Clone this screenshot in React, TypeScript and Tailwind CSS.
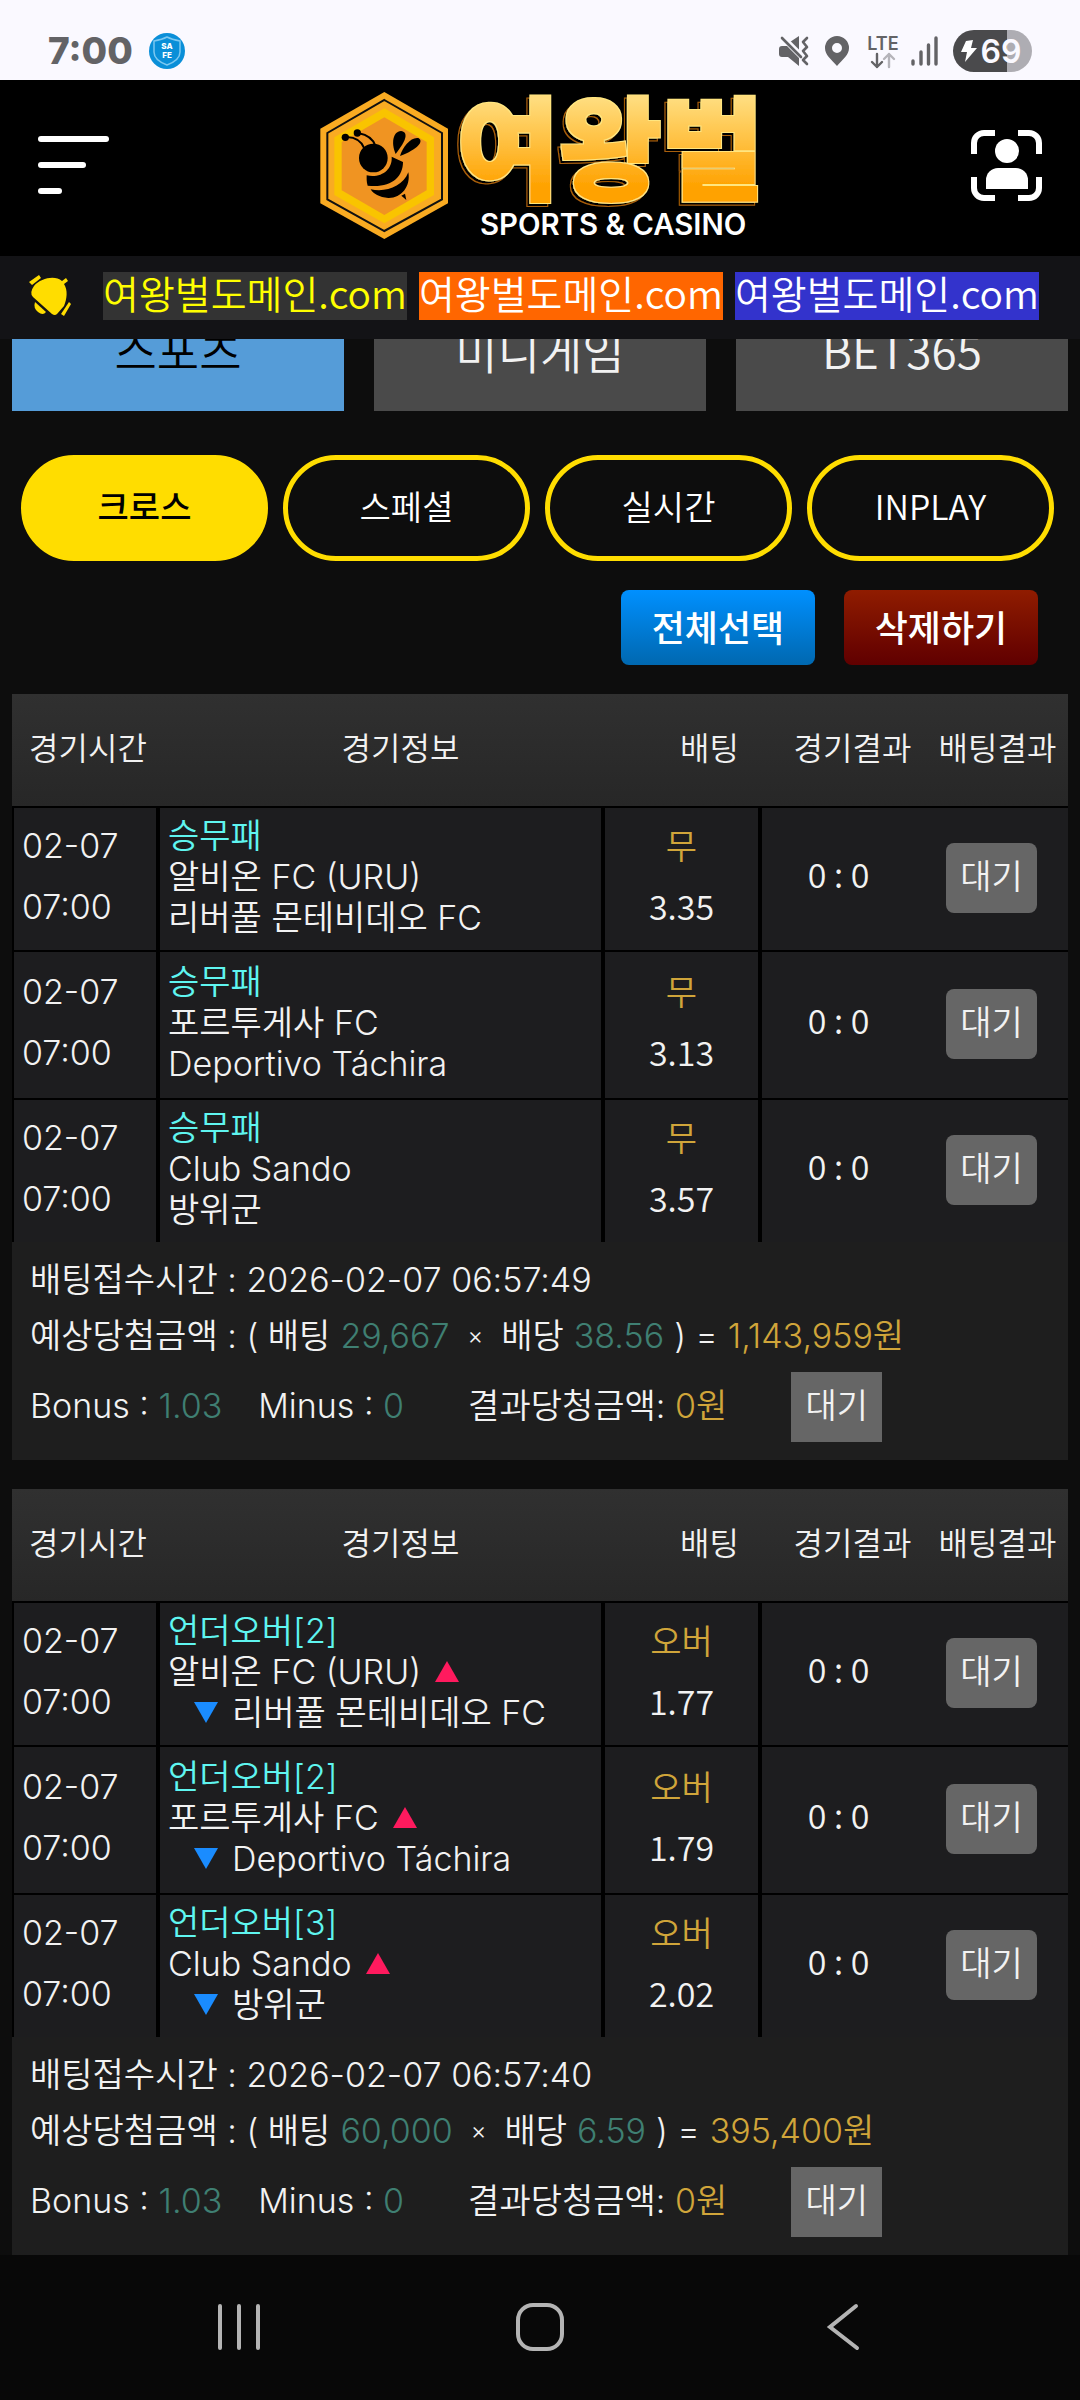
import type { ReactNode } from "react";

interface Match {
  market: string;
  home: string;
  away: string;
  pick: string;
  odds: string;
  tall?: boolean;
}

interface Slip {
  id: number;
  arrows: boolean;
  matches: Match[];
  time: string;
  stake: string;
  totalOdds: string;
  payout: string;
}

const slips: Slip[] = [
  {
    id: 1,
    arrows: false,
    matches: [
      { market: "승무패", home: "알비온 FC (URU)", away: "리버풀 몬테비데오 FC", pick: "무", odds: "3.35" },
      { market: "승무패", home: "포르투게사 FC", away: "Deportivo Táchira", pick: "무", odds: "3.13", tall: true },
      { market: "승무패", home: "Club Sando", away: "방위군", pick: "무", odds: "3.57" },
    ],
    time: "2026-02-07 06:57:49",
    stake: "29,667",
    totalOdds: "38.56",
    payout: "1,143,959원",
  },
  {
    id: 2,
    arrows: true,
    matches: [
      { market: "언더오버[2]", home: "알비온 FC (URU)", away: "리버풀 몬테비데오 FC", pick: "오버", odds: "1.77" },
      { market: "언더오버[2]", home: "포르투게사 FC", away: "Deportivo Táchira", pick: "오버", odds: "1.79", tall: true },
      { market: "언더오버[3]", home: "Club Sando", away: "방위군", pick: "오버", odds: "2.02" },
    ],
    time: "2026-02-07 06:57:40",
    stake: "60,000",
    totalOdds: "6.59",
    payout: "395,400원",
  },
];

const domains = [
  { id: "yellow", className: "bg-[#333333] pb-2 text-[#ffff00]" },
  { id: "orange", className: "bg-[#ff6600] pb-2 text-white" },
  { id: "blue", className: "bg-[#3333cc] pb-2 text-white" },
];

function StatusBar() {
  return (
    <div className="flex h-20 items-center justify-between bg-[#faf9ff] pt-[22px] pr-12 pl-12 text-[#636366]">
      <div className="flex items-center gap-4">
        <span className="font-['Inter'] text-[37px] leading-10 font-extrabold">7:00</span>
        <svg className="size-9" viewBox="0 0 36 36">
          <circle cx="18" cy="18" r="18" fill="#0a8fd8" />
          <path d="M18 4c4 2 8 3 13 4v11c0 6-5 10-13 13C10 29 5 25 5 19V8c5-1 9-2 13-4z" fill="none" stroke="#7cc8f0" strokeWidth="1.5" />
          <text x="18" y="16" textAnchor="middle" fontFamily="Inter" fontSize="8" fontWeight="800" fill="#fff">SA</text>
          <text x="18" y="25" textAnchor="middle" fontFamily="Inter" fontSize="8" fontWeight="800" fill="#fff">FE</text>
        </svg>
      </div>
      <div className="flex items-center">
        <svg className="mr-4 h-[30px] w-[30px]" viewBox="0 0 30 30">
          <path d="M0 13q0-3 3-3h5l12 12v8L9 21H3q-3 0-3-3z" fill="currentColor" />
          <path d="M11 6l9-6v15z" fill="currentColor" />
          <path d="M3 2l19 19" stroke="currentColor" strokeWidth="2.6" strokeLinecap="round" />
          <path d="M28 2l-4 4 4 5-4 4 4 5-4 4 4 4" fill="none" stroke="currentColor" strokeWidth="2.6" strokeLinejoin="round" strokeLinecap="round" />
          <path d="M6 1l17 17" stroke="#faf9ff" strokeWidth="2" />
        </svg>
        <svg className="mr-[18px] h-[30px] w-6" viewBox="0 0 24 30">
          <path fillRule="evenodd" d="M12 0a12 12 0 0 1 12 12c0 7-6 11-12 18C6 23 0 19 0 12A12 12 0 0 1 12 0zm0 7a5 5 0 1 0 0 10 5 5 0 0 0 0-10z" fill="currentColor" />
        </svg>
        <svg className="mr-3 h-9 w-8" viewBox="0 0 32 36">
          <text x="16" y="17" textAnchor="middle" fontFamily="Inter" fontSize="18" fontWeight="600" fill="currentColor">LTE</text>
          <path d="M10 21v13M5 29l5 5 5-5" fill="none" stroke="currentColor" strokeWidth="2.4" strokeLinecap="round" strokeLinejoin="round" />
          <path d="M22 34V21M17 26l5-5 5 5" fill="none" stroke="#b5b4ba" strokeWidth="2.4" strokeLinecap="round" strokeLinejoin="round" />
        </svg>
        <svg className="mr-[15px] h-[30px] w-[27px]" viewBox="0 0 27 30">
          <path d="M2 28v-3M10 28V16M17.500 28V9M25 28V2" stroke="currentColor" strokeWidth="3.4" strokeLinecap="round" />
        </svg>
        <svg className="h-[42px] w-[79px]" viewBox="0 0 79 42">
          <path d="M21 0h33v42H21a21 21 0 0 1 0-42z" fill="#4a4a4c" />
          <path d="M54 0h4a21 21 0 0 1 0 42h-4z" fill="#aeadb3" />
          <path d="M13 11l7-1-2 8h6L12 32l2-10H8z" fill="#fff" />
          <text x="48" y="33" textAnchor="middle" fontFamily="Inter" fontSize="32" fontWeight="600" fill="#faf9ff">69</text>
        </svg>
      </div>
    </div>
  );
}

function Logo() {
  return (
    <svg className="h-[150px] w-[441px] overflow-visible" viewBox="57 30 1323 450" role="img" aria-label="여왕벌 SPORTS & CASINO">
      <defs>
        <linearGradient id="gold" gradientUnits="userSpaceOnUse" x1="0" y1="60" x2="0" y2="350">
          <stop offset="0" stopColor="#ffdc7c" />
          <stop offset="0.9" stopColor="#ffa200" />
        </linearGradient>
        {/* brown contour behind the wordmark, shifted down and left */}
        <filter id="contour" x="-5%" y="-5%" width="110%" height="110%">
          <feOffset in="SourceAlpha" dx="-10" dy="10" result="shifted" />
          <feMorphology in="shifted" operator="dilate" radius="3" result="wide" />
          <feFlood floodColor="#a85f10" />
          <feComposite in2="wide" operator="in" result="brown" />
          <feFlood floodColor="#000" />
          <feComposite in2="shifted" operator="in" result="inner" />
          <feMorphology in="SourceAlpha" operator="dilate" radius="2" result="edge" />
          <feFlood floodColor="#ffe680" />
          <feComposite in2="edge" operator="in" result="rim" />
          <feMerge>
            <feMergeNode in="brown" />
            <feMergeNode in="inner" />
            <feMergeNode in="rim" />
            <feMergeNode in="SourceGraphic" />
          </feMerge>
        </filter>
      </defs>
      <path d="M250 36L441 146V370L250 477L58 370V146Z" fill="#f9ab22" />
      <path d="M250 60L423 159V358L250 453L79 358V159Z" fill="none" stroke="#111" strokeWidth="6" />
      <path d="M250 85L399 172V345L250 430L100 345V172Z" fill="#f9c400" />
      <path d="M250 112L377 186V331L250 405L122 331V186Z" fill="#f09422" />
      <circle cx="217" cy="234" r="43" />
      <circle cx="133" cy="172" r="11" />
      <circle cx="169" cy="159" r="11" />
      <path d="M138 171C165 172 182 185 190 205M174 160C200 165 216 178 223 197" fill="none" stroke="#000" strokeWidth="6" />
      <path d="M284 222C270 190 275 155 300 153C322 157 318 178 284 222Z" />
      <path d="M297 228C305 200 330 170 352 174C370 184 350 208 297 228Z" />
      <path d="M272 230L306 246C306 292 270 325 200 317C196 305 197 295 197 286C240 295 275 270 272 230Z" />
      <path d="M322 277C330 320 300 355 262 354C235 352 217 342 209 328C255 338 305 320 322 277Z" />
      <path d="M301 347L316 360L312 341Z" />
      <text
        x="467"
        y="332"
        fontFamily="'Noto Sans CJK KR'"
        fontWeight="900"
        fontSize="334"
        fill="url(#gold)"
        stroke="url(#gold)"
        strokeWidth="6"
        filter="url(#contour)"
      >
        여왕벌
      </text>
      <text x="537" y="464" fontFamily="Inter" fontWeight="600" fontSize="88" fill="#fff">SPORTS &amp; CASINO</text>
    </svg>
  );
}

function Header() {
  return (
    <header className="flex h-44 items-center justify-between bg-black px-[38px] pb-[6px]">
      <button type="button" aria-label="menu" className="flex w-[71px] flex-col gap-5">
        <span className="h-[6px] w-full rounded-full bg-white" />
        <span className="h-[6px] w-12 rounded-full bg-white" />
        <span className="h-[6px] w-6 rounded-full bg-white" />
      </button>
      <Logo />
      <button type="button" aria-label="account" className="w-[71px]">
        <svg className="size-[71px]" viewBox="0 0 71 71" fill="none">
          <path d="M24 3H13A10 10 0 0 0 3 13V24M47 3H58A10 10 0 0 1 68 13V24M24 68H13A10 10 0 0 1 3 58V47M47 68H58A10 10 0 0 0 68 58V47" stroke="#fff" strokeWidth="6" />
          <circle cx="36" cy="21" r="12" fill="#fff" />
          <path d="M15 59V50A12 12 0 0 1 27 38H45A12 12 0 0 1 57 50V59Z" fill="#fff" />
        </svg>
      </button>
    </header>
  );
}

function NoticeBar() {
  return (
    <div className="flex h-[83px] items-center bg-[#131316] pb-1 pl-[29px]">
      <svg className="mr-8 h-[42px] w-[42px] shrink-0" viewBox="0 0 42 42" fill="#ffdd00">
        <path d="M5 11C12 3 26 0 33 6L37 3L39 6L35 9C39 15 38 24 35 31L28 39Q26 41 23 39L4 22Q0 18 5 11Z" />
        <path d="M0 7L10 0L12 3L3 10Z" />
        <path d="M6 27L17 37Q14 41 9 37Q4 33 6 27Z" />
        <path d="M40 27L42 29L35 41L32 39Z" />
      </svg>
      <div className="flex gap-3 text-[39px] leading-10 whitespace-nowrap">
        {domains.map((domain) => (
          <a key={domain.id} href="#domain" className={domain.className}>
            여왕벌도메인.com
          </a>
        ))}
      </div>
    </div>
  );
}

function Pill({ active, children }: { active?: boolean; children: ReactNode }) {
  return (
    <button
      type="button"
      className={
        active
          ? "h-[106px] flex-1 rounded-full border-5 border-[#ffdd00] bg-[#ffdd00] pb-[6px] font-medium text-black"
          : "h-[106px] flex-1 rounded-full border-5 border-[#ffdd00] pb-[6px] text-white"
      }
    >
      {children}
    </button>
  );
}

function Triangle({ up }: { up?: boolean }) {
  return (
    <svg className="h-[21px] w-6" viewBox="0 0 24 21">
      {up ? <path d="M12 0L24 21H0Z" fill="#ff1a5e" /> : <path d="M0 0H24L12 21Z" fill="#1a8cff" />}
    </svg>
  );
}

function MatchRow({ match, arrows }: { match: Match; arrows: boolean }) {
  return (
    <tr className={match.tall ? "h-[148px] bg-[#1d1d1f]" : "h-36 bg-[#1d1d1f]"}>
      <td className="border-t-2 border-r-4 border-l-2 border-black pb-[6px] pl-2 font-['Inter','Noto_Sans_CJK_KR',sans-serif] leading-[61px]">
        <div>02-07</div>
        <div>07:00</div>
      </td>
      <td className="border-t-2 border-r-4 border-black pb-[6px] pl-2 font-['Inter','Noto_Sans_CJK_KR',sans-serif] leading-[41px] whitespace-nowrap">
        <div className="text-[#5ff5f0]">{match.market}</div>
        <div className="flex items-center gap-[14px]">
          {match.home}
          {arrows && <Triangle up />}
        </div>
        <div className={arrows ? "flex items-center gap-[14px] pl-[26px]" : "flex items-center"}>
          {arrows && <Triangle />}
          {match.away}
        </div>
      </td>
      <td className="border-t-2 border-r-4 border-black pb-2 text-center leading-[61px]">
        <div className="text-[#d0a53a]">{match.pick}</div>
        <div>{match.odds}</div>
      </td>
      <td className="border-t-2 border-black pb-3 text-center">0 : 0</td>
      <td className="border-t-2 border-black pb-[2px] text-center">
        <button type="button" className="h-[70px] w-[91px] rounded-lg bg-[#666666] pb-2">
          대기
        </button>
      </td>
    </tr>
  );
}

function BetSlip({ slip }: { slip: Slip }) {
  return (
    <section className="bg-[#1e1e1e]">
      <table className="w-full table-fixed border-separate border-spacing-0">
        <colgroup>
          <col className="w-[148px]" />
          <col />
          <col className="w-[157px]" />
          <col className="w-[153px]" />
          <col className="w-[153px]" />
        </colgroup>
        <thead>
          <tr className="h-28 bg-linear-to-b from-[#303030] to-[#272727] text-[32px] whitespace-nowrap *:pb-2 *:font-[350]">
            <th className="pl-1">경기시간</th>
            <th className="pl-9">경기정보</th>
            <th className="pl-13">배팅</th>
            <th className="pl-7">경기결과</th>
            <th className="pl-3">배팅결과</th>
          </tr>
        </thead>
        <tbody>
          {slip.matches.map((match) => (
            <MatchRow key={match.home} match={match} arrows={slip.arrows} />
          ))}
        </tbody>
      </table>
      <div className="px-[18px] pt-[10px] pb-[18px] font-['Inter','Noto_Sans_CJK_KR',sans-serif] whitespace-nowrap">
        <p className="leading-14">배팅접수시간 : {slip.time}</p>
        <p className="flex gap-[10px] leading-14">
          <span>예상당첨금액 : ( 배팅</span>
          <span className="mr-2 text-[#3f7f72]">{slip.stake}</span>
          <span className="mr-2 text-[24px]">×</span>
          <span>배당</span>
          <span className="text-[#3f7f72]">{slip.totalOdds}</span>
          <span>) =</span>
          <span className="text-[#d0a53a]">{slip.payout}</span>
        </p>
        <div className="mt-2 flex h-[70px] items-center">
          <span className="mr-9 pb-1">
            Bonus : <span className="text-[#3f7f72]">1.03</span>
          </span>
          <span className="mr-16 pb-1">
            Minus : <span className="text-[#3f7f72]">0</span>
          </span>
          <span className="mr-16 pb-1">
            결과당청금액: <span className="text-[#d0a53a]">0원</span>
          </span>
          <button type="button" className="h-[70px] w-[91px] bg-[#666666] pb-1">
            대기
          </button>
        </div>
      </div>
    </section>
  );
}

function NavBar() {
  return (
    <nav className="grid h-[145px] grid-cols-3 items-center justify-items-center bg-[#080808] px-22 pb-[2px] text-[#b4b4b4]">
      <button type="button" aria-label="recents">
        <svg className="size-12" viewBox="0 0 48 48">
          <path d="M5 3V45M24 3V45M43 3V45" stroke="currentColor" strokeWidth="4" strokeLinecap="round" />
        </svg>
      </button>
      <button type="button" aria-label="home">
        <svg className="size-12" viewBox="0 0 48 48">
          <rect x="2" y="2" width="44" height="44" rx="15" fill="none" stroke="currentColor" strokeWidth="4" />
        </svg>
      </button>
      <button type="button" aria-label="back">
        <svg className="size-12" viewBox="0 0 48 48">
          <path d="M39 3L13 24L40 45" fill="none" stroke="currentColor" strokeWidth="4" strokeLinecap="round" />
        </svg>
      </button>
    </nav>
  );
}

export default function App() {
  return (
    <div className="min-h-screen bg-[#0d0d0d] font-['Noto_Sans_CJK_KR',sans-serif] text-[34px] font-[350] text-[#f2f2f2]">
      <div className="relative z-10">
        <StatusBar />
        <Header />
        <NoticeBar />
      </div>
      <div className="-mt-13 grid grid-cols-3 gap-[30px] px-3 text-[46px]">
        <button type="button" className="h-31 bg-[#559cd8] text-black">스포츠</button>
        <button type="button" className="h-31 bg-[#4a4a4a]">미니게임</button>
        <button type="button" className="h-31 bg-[#4a4a4a]">BET365</button>
      </div>
      <div className="mt-11 flex gap-[15px] px-[21px] pr-[26px]">
        <Pill active>크로스</Pill>
        <Pill>스페셜</Pill>
        <Pill>실시간</Pill>
        <Pill>INPLAY</Pill>
      </div>
      <div className="mt-[29px] flex justify-end gap-[29px] pr-[42px] text-[36px] font-medium text-white text-shadow-[0_-2px_1px_rgb(0_0_0/0.4)]">
        <button type="button" className="h-[75px] w-[194px] rounded-lg bg-linear-to-b from-[#0090ff] to-[#0068b0] pb-1">
          전체선택
        </button>
        <button type="button" className="h-[75px] w-[194px] rounded-lg bg-linear-to-b from-[#901c00] to-[#600000] pb-1">
          삭제하기
        </button>
      </div>
      <main className="mt-[29px] flex flex-col gap-[29px] px-3">
        {slips.map((slip) => (
          <BetSlip key={slip.id} slip={slip} />
        ))}
      </main>
      <NavBar />
    </div>
  );
}
